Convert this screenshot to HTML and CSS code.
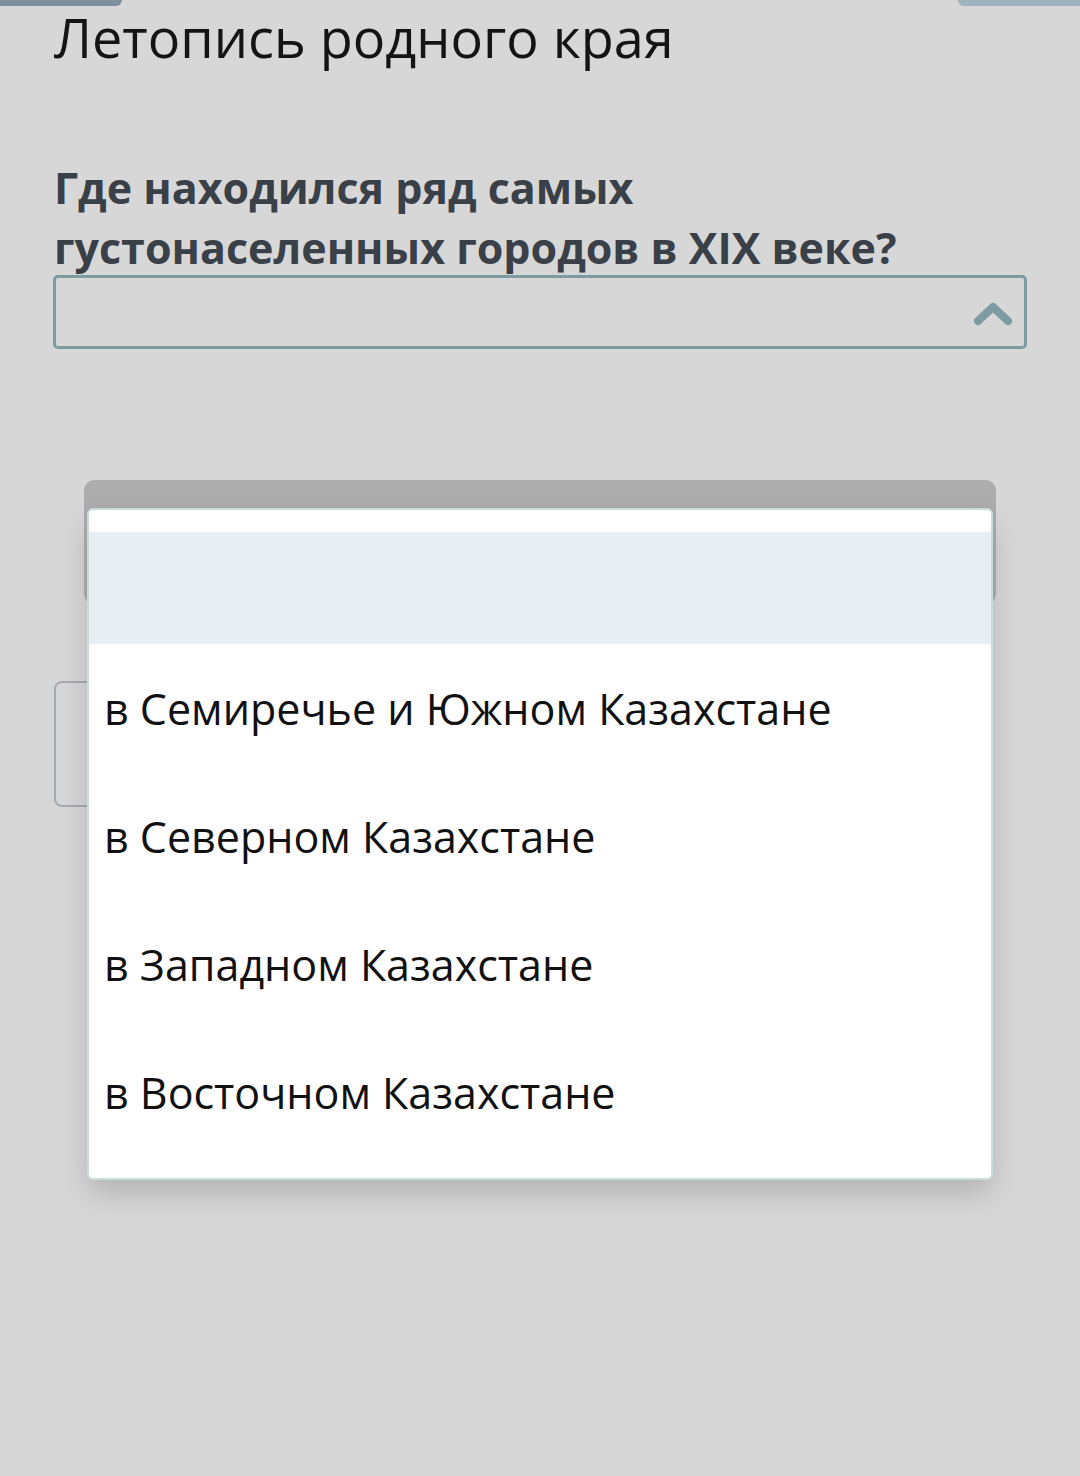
FILE: index.html
```html
<!DOCTYPE html>
<html lang="ru">
<head>
    <meta charset="UTF-8">
    <meta name="viewport" content="width=device-width, initial-scale=1.0">
    <title>Летопись родного края</title>
    <link rel="stylesheet" href="styles.css">
</head>
<body>

<div class="tabs">
    <div class="tab tab-left"></div>
    <div class="tab tab-right"></div>
</div>

<div class="page">
    <h1 class="title">Летопись родного края</h1>

    <h2 class="question">Где находился ряд самых<br>густонаселенных городов в XIX веке?</h2>
    <div class="select">
        <svg class="chevron" width="40" height="30" viewBox="0 0 40 30">
            <polyline points="5,23 20,9 35,23" fill="none" stroke="#7d9ba1" stroke-width="8" stroke-linecap="round" stroke-linejoin="round"/>
        </svg>
    </div>

    <div class="card-head"></div>
    <div class="select select-next"></div>
</div>

<!-- open dropdown list -->
<div class="dropdown">
    <div class="option option-empty"></div>
    <div class="option">в Семиречье и Южном Казахстане</div>
    <div class="option">в Северном Казахстане</div>
    <div class="option">в Западном Казахстане</div>
    <div class="option">в Восточном Казахстане</div>
</div>

</body>
</html>
```

FILE: styles.css
```css
body {
    margin: 0;
    padding: 0;
    background: #d7d7d7;
    font-family: "Open Sans", "Noto Sans", sans-serif;
    width: 1080px;
    height: 1476px;
    overflow: hidden;
    position: relative;
}
.tabs {
    display: flex;
    justify-content: space-between;
    height: 6px;
}
.tab {
    width: 122px;
    height: 6px;
}
.tab-left {
    background: #7e909d;
    border-bottom-right-radius: 8px;
}
.tab-right {
    background: #9fb3c0;
    border-bottom-left-radius: 8px;
}
.page {
    padding: 0 53px;
}
.title {
    margin: -4px 0 0 1px;
    font-size: 54px;
    font-weight: 400;
    line-height: 71px;
    color: #141414;
}
.question {
    margin: 85px 0 0 1px;
    font-size: 43px;
    font-weight: 700;
    line-height: 60px;
    color: #3a4047;
}
.select {
    margin-top: -3px;
    height: 68px;
    border: 3px solid #7d9ba1;
    border-radius: 5px;
    display: flex;
    align-items: center;
    justify-content: flex-end;
    padding-right: 11px;
}
.chevron {
    margin-top: 2px;
}
.card-head {
    margin: 131px 31px 0 31px;
    height: 124px;
    background: #adadad;
    border-radius: 10px;
}
.select-next {
    margin: 77px 80px 0 1px;
    height: 122px;
    border: 2px solid #a3abb0;
    border-radius: 8px;
}
.dropdown {
    position: absolute;
    left: 87px;
    top: 508px;
    width: 906px;
    height: 672px;
    padding-top: 22px;
    box-sizing: border-box;
    background: #fff;
    border: 2px solid #c9dcdd;
    border-radius: 6px;
    box-shadow: 0 14px 28px rgba(0, 0, 0, 0.16);
}
.option {
    height: 128px;
    padding-left: 15px;
    display: flex;
    align-items: center;
    font-size: 43px;
    color: #111;
}
.option-empty {
    height: 112px;
    background: #e8eff2;
}
```
